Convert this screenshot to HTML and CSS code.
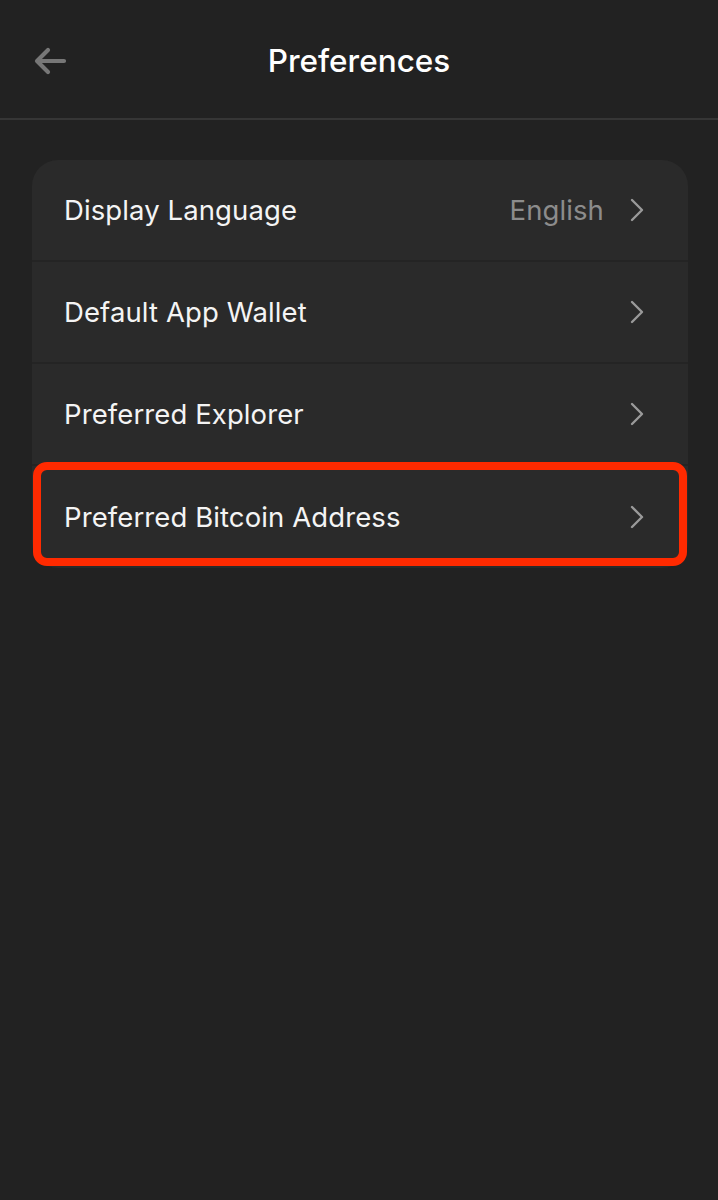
FILE: index.html
```html
<!DOCTYPE html>
<html lang="en">
<head>
<meta charset="utf-8">
<title>Preferences</title>
<link rel="stylesheet" href="styles.css">
</head>
<body>
<div class="screen">
  <header class="topbar">
    <button class="back" aria-label="Back">
      <svg width="34" height="28" viewBox="0 0 34 28"><path d="M31 14H5M15 3L4 14l11 11" fill="none" stroke="#777" stroke-width="4.2" stroke-linecap="round" stroke-linejoin="round"/></svg>
    </button>
    <h1 class="title">Preferences</h1>
  </header>
  <main class="content">
    <div class="card">
      <div class="row">
        <span class="label">Display Language</span>
        <span class="value">English</span>
        <svg class="chev" width="16" height="26" viewBox="0 0 16 26"><path d="M3 3l10 10L3 23" fill="none" stroke="#9a9a9a" stroke-width="2.4" stroke-linecap="round" stroke-linejoin="round"/></svg>
      </div>
      <div class="row">
        <span class="label">Default App Wallet</span>
        <svg class="chev" width="16" height="26" viewBox="0 0 16 26"><path d="M3 3l10 10L3 23" fill="none" stroke="#9a9a9a" stroke-width="2.4" stroke-linecap="round" stroke-linejoin="round"/></svg>
      </div>
      <div class="row">
        <span class="label">Preferred Explorer</span>
        <svg class="chev" width="16" height="26" viewBox="0 0 16 26"><path d="M3 3l10 10L3 23" fill="none" stroke="#9a9a9a" stroke-width="2.4" stroke-linecap="round" stroke-linejoin="round"/></svg>
      </div>
      <div class="row highlighted">
        <span class="label">Preferred Bitcoin Address</span>
        <svg class="chev" width="16" height="26" viewBox="0 0 16 26"><path d="M3 3l10 10L3 23" fill="none" stroke="#9a9a9a" stroke-width="2.4" stroke-linecap="round" stroke-linejoin="round"/></svg>
        <div class="mark"></div>
      </div>
    </div>
  </main>
</div>
</body>
</html>
```

FILE: styles.css
```css
* { box-sizing: border-box; }
html, body { margin: 0; padding: 0; background: #222222; }
body {
  font-family: Inter, "Noto Sans", "Liberation Sans", sans-serif;
  color: #ffffff;
  width: 718px;
  height: 1200px;
  overflow: hidden;
}
.screen { display: flex; flex-direction: column; }
.topbar {
  position: relative;
  height: 120px;
  display: flex;
  align-items: center;
  justify-content: center;
  border-bottom: 2px solid #363636;
}
.back {
  position: absolute;
  left: 32px;
  top: 46px;
  width: 36px;
  height: 30px;
  padding: 0;
  border: 0;
  background: none;
  display: flex;
  align-items: center;
  justify-content: center;
}
.title {
  margin: 2px 0 0 0;
  font-size: 31.5px;
  font-weight: 500;
  letter-spacing: 0;
  color: #ffffff;
}
.content { padding: 40px 30px 0 32px; }
.card {
  background: #2a2a2a;
  border-radius: 26px;
  display: flex;
  flex-direction: column;
}
.row {
  position: relative;
  height: 102px;
  display: flex;
  align-items: center;
  padding: 0 43px 0 32px;
  border-bottom: 2px solid #242424;
}
.row:last-child { border-bottom: 0; }
.label {
  flex: 1;
  font-size: 27.5px;
  font-weight: 400;
  color: #f4f4f4;
  letter-spacing: 0.1px;
}
.value {
  font-size: 27.5px;
  color: #8c8c8c;
  margin-right: 25px;
  letter-spacing: 0.1px;
}
.chev { display: block; }
.mark {
  position: absolute;
  left: 1px;
  right: 1px;
  top: -4px;
  bottom: 2px;
  border: 8px solid #ff2a00;
  border-radius: 14px;
  pointer-events: none;
}
```
